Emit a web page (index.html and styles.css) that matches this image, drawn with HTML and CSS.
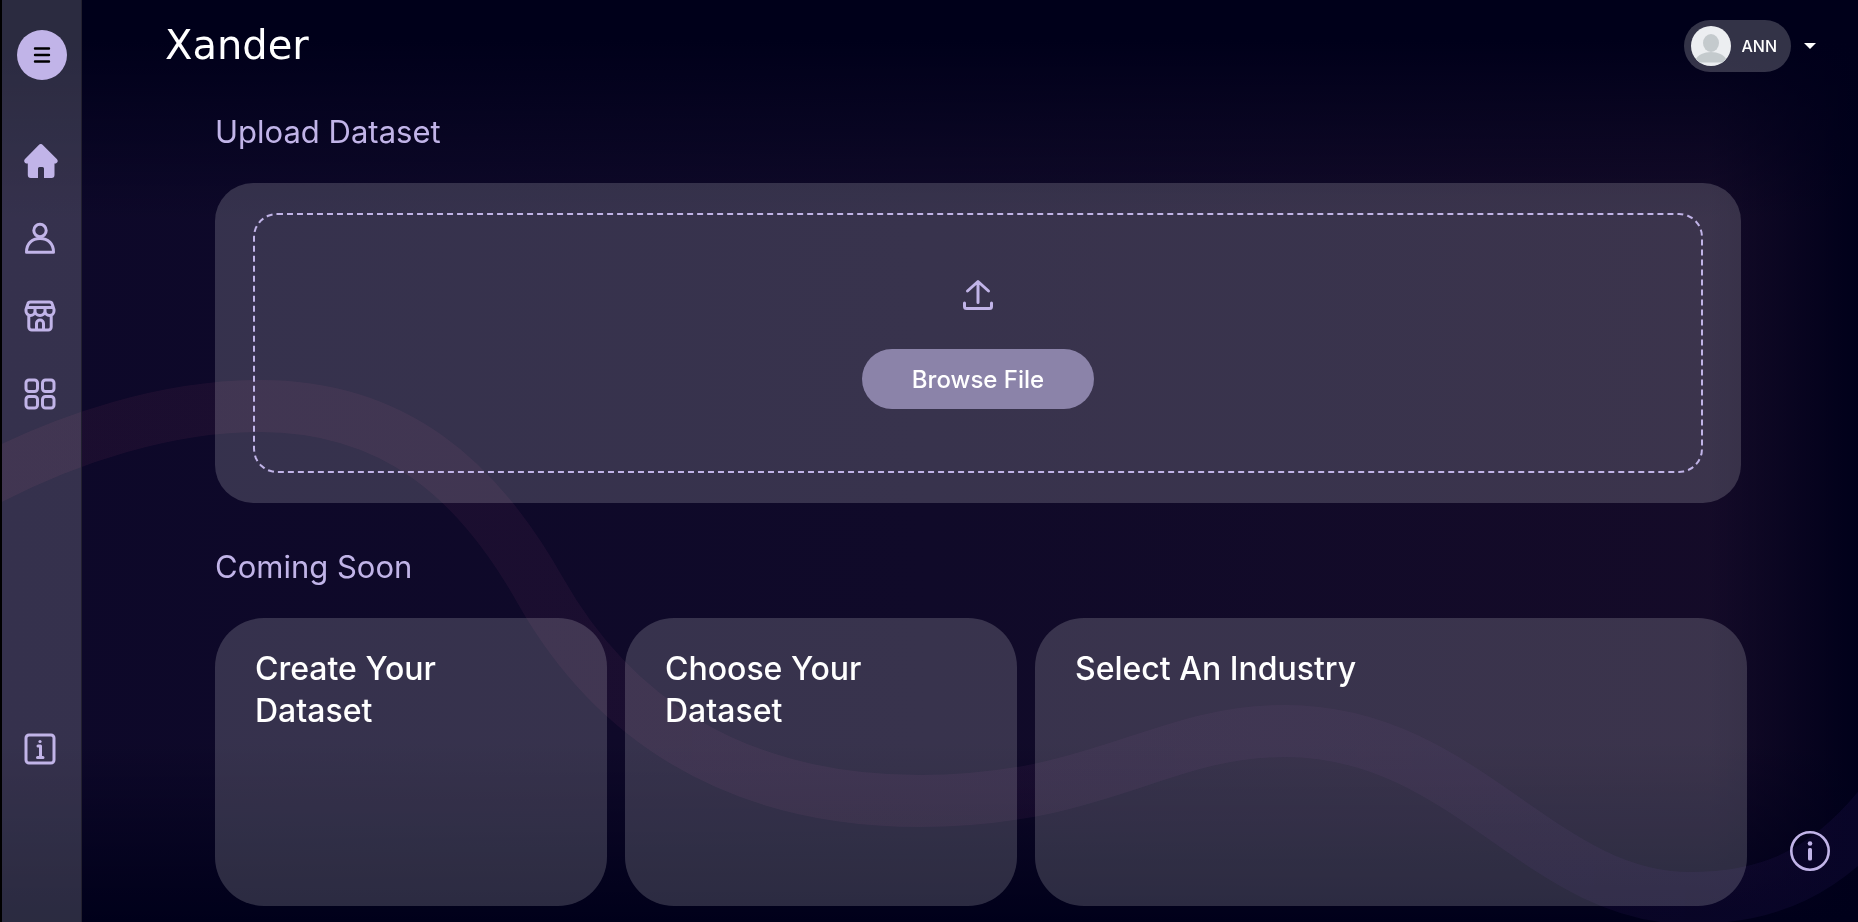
FILE: index.html
```
<!DOCTYPE html>
<html lang="en">
<head>
  <meta charset="UTF-8">
  <meta name="viewport" content="width=device-width, initial-scale=1">
  <title>Xander</title>
  <link rel="stylesheet" href="styles.css">
</head>
<body>

  <svg class="wave" viewBox="0 0 1858 922" preserveAspectRatio="none" aria-hidden="true">
    <defs>
      <linearGradient id="waveColor" gradientUnits="userSpaceOnUse" x1="0" y1="0" x2="1858" y2="0">
        <stop offset="0" stop-color="#c85078" stop-opacity="0.08"/>
        <stop offset="0.5" stop-color="#b450a0" stop-opacity="0.07"/>
        <stop offset="0.75" stop-color="#9650b4" stop-opacity="0.06"/>
        <stop offset="1" stop-color="#643cc8" stop-opacity="0.08"/>
      </linearGradient>
    </defs>
    <path d="M-20 484C70 436 170 406 260 406C395 406 478 480 540 590C610 714 730 801 920 801C1100 801 1160 731 1285 731C1465 731 1540 898 1690 898C1770 898 1826 872 1880 806" fill="none" stroke="url(#waveColor)" stroke-width="52"/>
  </svg>

  <nav class="sidebar" aria-label="Main">
    <button class="menu" aria-label="Menu">
      <svg width="18" height="18" viewBox="0 0 18 18"><path d="M2 2.500h14M2 9h14M2 15.500h14" stroke="#000" stroke-width="2.400" stroke-linecap="round"/></svg>
    </button>
    <a href="#" aria-label="Home">
      <svg width="34" height="34" viewBox="0 0 34 34"><path fill="#c1b4e8" d="M14.800 1a2.800 2.800 0 0 1 4 0L32.800 15c2 2 .5 4.600-2.300 4.600V31a3 3 0 0 1-3 3H20V24.500a1.500 1.500 0 0 0-1.500-1.500h-3a1.500 1.500 0 0 0-1.500 1.500V34H6.800a3 3 0 0 1-3-3V19.600C.6 19.600-.9 17 1 15z"/></svg>
    </a>
    <a href="#" aria-label="Profile">
      <svg class="line" width="34" height="34" viewBox="0 0 34 34"><circle cx="16" cy="8.500" r="6.200"/><path d="M2.500 30.200C2.500 21.500 8 16.500 16 16.500S29.500 21.500 29.500 30.200z"/></svg>
    </a>
    <a href="#" aria-label="Store">
      <svg class="line" width="34" height="34" viewBox="0 0 34 34"><path d="M6.500 2h19c1.500 0 2.400.8 2.800 2.200L30 9.500V11a4.500 4.500 0 0 1-9 0 5 4.500 0 0 1-10 0 4.500 4.500 0 0 1-9 0V9.500l1.700-5.300C4.100 2.800 5 2 6.500 2zM4 7.500h24M11 8v3M21 8v3M4.800 16v11a3 3 0 0 0 3 3h16.400a3 3 0 0 0 3-3V16M12.500 30v-6.500a3.500 3.500 0 0 1 7 0V30"/></svg>
    </a>
    <a href="#" aria-label="Apps">
      <svg class="line" width="34" height="34" viewBox="0 0 34 34"><rect x="2" y="2" width="11.500" height="11.500" rx="3"/><rect x="18.500" y="2" width="11.500" height="11.500" rx="3"/><rect x="2" y="18.500" width="11.500" height="11.500" rx="3"/><rect x="18.500" y="18.500" width="11.500" height="11.500" rx="3"/></svg>
    </a>
    <a class="about" href="#" aria-label="About">
      <svg class="line" width="34" height="34" viewBox="0 0 34 34"><rect x="2" y="2" width="28" height="28" rx="3"/><path d="M14 13h2.500v11M13.500 24.500h5.500"/><circle cx="16" cy="8.500" r="1.600" fill="#c1b4e8" stroke="none"/></svg>
    </a>
  </nav>

  <div class="page">
    <header class="topbar">
      <a class="logo" href="#">Xander</a>
      <button class="user">
        <span class="pill">
          <svg class="avatar" width="40" height="40" viewBox="0 0 40 40"><circle cx="20" cy="20" r="20" fill="#eceef1"/><ellipse cx="20" cy="17" rx="8" ry="9" fill="#c4cacd"/><path d="M5 33c2-4 8-7 15-7s13 3 15 7q-1.500 2-3.500 3.400h-23Q6.500 35 5 33z" fill="#c4cacd"/></svg>
          ANN
        </span>
        <svg width="12" height="6" viewBox="0 0 12 6"><path d="M0 0h12L6 6z" fill="#fff"/></svg>
      </button>
    </header>

    <main class="content">
      <h2>Upload Dataset</h2>
      <section class="upload">
        <div class="dropzone">
          <svg class="line" width="34" height="34" viewBox="0 0 34 34"><path d="M17 25.500V5M6.500 14L17 4.500 27.500 14M3.500 26v3.500a2 2 0 0 0 2 2h23a2 2 0 0 0 2-2V26"/></svg>
          <button class="browse">Browse File</button>
        </div>
      </section>

      <h2>Coming Soon</h2>
      <section class="cards">
        <div class="card"><h3>Create Your Dataset</h3></div>
        <div class="card"><h3>Choose Your Dataset</h3></div>
        <div class="card"><h3>Select An Industry</h3></div>
      </section>
    </main>
  </div>

  <button class="help" aria-label="Help">
    <svg width="40" height="40" viewBox="0 0 40 40"><circle cx="20" cy="20" r="18.700" fill="none" stroke="#c1b4e8" stroke-width="2.600"/><circle cx="20" cy="12.500" r="2.300" fill="#c1b4e8"/><rect x="18" y="17" width="4" height="12.500" rx="1.500" fill="#c1b4e8"/></svg>
  </button>

</body>
</html>
```
FILE: styles.css
```
* {
  box-sizing: border-box;
}
body {
  margin: 0;
  min-height: 100vh;
  display: flex;
  font-family: Inter, "Liberation Sans", sans-serif;
  color: #fff;
  background:
    linear-gradient(to bottom, #00001a 40px, rgba(0, 0, 26, 0) 220px),
    linear-gradient(to top, #00001a, rgba(0, 0, 26, 0) 180px),
    linear-gradient(to left, #00001a, rgba(0, 0, 26, 0) 150px),
    linear-gradient(to right, #0d0829, #100a29 50%, #150b28);
}
button {
  font-family: inherit;
  color: inherit;
  border: 0;
  padding: 0;
  background: none;
  cursor: pointer;
}
svg {
  display: block;
}
.line {
  fill: none;
  stroke: #c1b4e8;
  stroke-width: 3px;
  stroke-linecap: round;
  stroke-linejoin: round;
}
.wave {
  position: fixed;
  inset: 0;
  width: 100%;
  height: 100%;
  z-index: -1;
}

.sidebar {
  flex: none;
  width: 82px;
  padding: 30px 14px 155px 15px;
  border-left: 2px solid #000;
  border-right: 1px solid #22202f;
  display: flex;
  flex-direction: column;
  gap: 44px;
  background: rgba(255, 255, 255, 0.17);
}
.menu {
  width: 50px;
  height: 50px;
  margin-bottom: 20px;
  border-radius: 50%;
  background: #c1b4e8;
  display: flex;
  align-items: center;
  justify-content: center;
}
.sidebar a {
  padding-left: 7px;
}
.about {
  margin-top: auto;
}

.page {
  flex: 1;
}
.topbar {
  display: flex;
  justify-content: space-between;
  padding: 20px 42px 0 83px;
}
.logo {
  font-family: "DejaVu Sans", sans-serif;
  font-size: 40px;
  line-height: 50px;
  color: #fff;
  text-decoration: none;
}
.user {
  display: flex;
  align-items: center;
  gap: 13px;
}
.pill {
  display: flex;
  align-items: center;
  gap: 10px;
  height: 52px;
  padding: 0 14px 0 7px;
  border-radius: 26px;
  background: rgba(255, 255, 255, 0.2);
  font-size: 16px;
  font-weight: 500;
}

.content {
  padding: 40px 111px 16px 133px;
}
h2 {
  margin: 0 0 31px;
  font-size: 31px;
  line-height: 40px;
  font-weight: 400;
  color: #c1b4e8;
}
.upload {
  margin: 0 6px 44px 0;
  padding: 30px 38px;
  border-radius: 38px;
  background: rgba(255, 255, 255, 0.17);
}
.dropzone {
  min-height: 260px;
  padding: 62px 0;
  border: 2px dashed #c1b4e8;
  border-radius: 24px;
  display: flex;
  flex-direction: column;
  align-items: center;
  gap: 38px;
}
.browse {
  height: 60px;
  padding: 0 50px;
  border-radius: 30px;
  background: #8b83a9;
  font-size: 24px;
  font-weight: 500;
}
.cards {
  display: grid;
  grid-template-columns: 392fr 392fr 712fr;
  gap: 18px;
}
.card {
  min-height: 288px;
  padding: 30px 40px;
  border-radius: 49px;
  background: rgba(255, 255, 255, 0.17);
}
h3 {
  margin: 0;
  max-width: 300px;
  font-size: 32px;
  line-height: 42px;
  font-weight: 500;
}

.help {
  position: fixed;
  right: 28px;
  bottom: 51px;
}
```
